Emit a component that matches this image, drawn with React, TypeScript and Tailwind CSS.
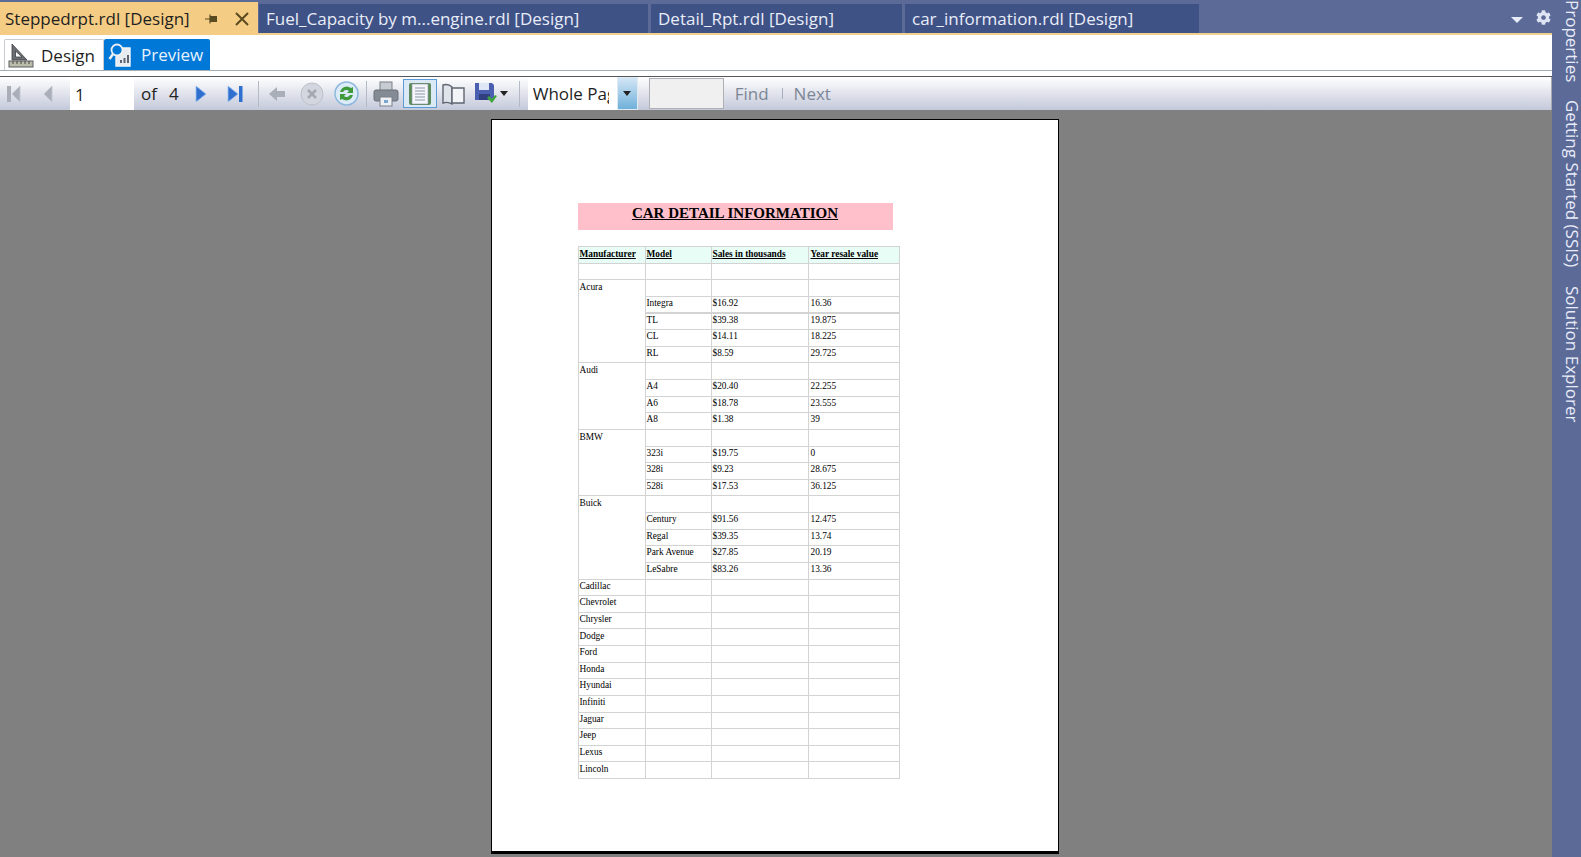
import { FaCog } from "react-icons/fa";

const sans = "font-['Open_Sans','Noto_Sans',sans-serif]";

type Row = { make?: string; span?: number; model?: string; sales?: string; resale?: string; thick?: boolean };

const rows: Row[] = [
  { make: "" },
  { make: "Acura", span: 5 },
  { model: "Integra", sales: "$16.92", resale: "16.36", thick: true },
  { model: "TL", sales: "$39.38", resale: "19.875" },
  { model: "CL", sales: "$14.11", resale: "18.225" },
  { model: "RL", sales: "$8.59", resale: "29.725" },
  { make: "Audi", span: 4 },
  { model: "A4", sales: "$20.40", resale: "22.255" },
  { model: "A6", sales: "$18.78", resale: "23.555" },
  { model: "A8", sales: "$1.38", resale: "39" },
  { make: "BMW", span: 4 },
  { model: "323i", sales: "$19.75", resale: "0" },
  { model: "328i", sales: "$9.23", resale: "28.675" },
  { model: "528i", sales: "$17.53", resale: "36.125" },
  { make: "Buick", span: 5 },
  { model: "Century", sales: "$91.56", resale: "12.475" },
  { model: "Regal", sales: "$39.35", resale: "13.74" },
  { model: "Park Avenue", sales: "$27.85", resale: "20.19" },
  { model: "LeSabre", sales: "$83.26", resale: "13.36" },
  ...["Cadillac", "Chevrolet", "Chrysler", "Dodge", "Ford", "Honda", "Hyundai", "Infiniti", "Jaguar", "Jeep", "Lexus", "Lincoln"].map((make) => ({ make })),
];

const cell = "border border-[#d3d3d3] pl-[1px] pr-[2px] pb-[2px] align-middle leading-none";

function Tab({ label, width }: { label: string; width: string }) {
  return (
    <div className={`${width} h-[29px] mt-[4px] mr-[3px] pl-[7px] bg-[#3f5286] text-[#e9edf8] text-[17px] leading-[29px] whitespace-nowrap`}>
      {label}
    </div>
  );
}

function Sep() {
  return <div className="w-px h-[26px] bg-[#b4b9c6] shrink-0" />;
}

function Tri({ dir, blue, bar }: { dir: "l" | "r"; blue?: boolean; bar?: boolean }) {
  const tri = dir === "l" ? "M15 2v16L7 10z" : "M4 2v16l10-8z";
  const line = dir === "l" ? "M2 2h4v16H2z" : "M15 2h3.500v16H15z";
  const color = blue ? "#2f6fd0" : "#a9aeb8";
  return (
    <svg width="20" height="20" viewBox="0 0 20 20" className="shrink-0">
      <path d={tri} fill={color} stroke={blue ? "#9dc0ee" : "#c3c7d0"} strokeWidth="0.8" />
      {bar && <path d={line} fill={color} />}
    </svg>
  );
}

function DesignIcon() {
  return (
    <svg width="26" height="26" viewBox="0 0 26 26" className="shrink-0">
      <path d="M4 1v16h15z M7.500 8v6h6.500z" fillRule="evenodd" fill="#6b6e72" stroke="#3c3f44" strokeWidth="0.8" />
      <rect x="1" y="18" width="24" height="6" fill="#bcbcaa" stroke="#5a5d60" />
      <path d="M5 18v3M9 18v3M13 18v3M17 18v3M21 18v3" stroke="#444" />
    </svg>
  );
}

function PreviewIcon() {
  return (
    <svg width="26" height="26" viewBox="0 0 26 26" className="shrink-0">
      <path d="M11 6h11v18H8V15z" fill="#e8ecf1" stroke="#f4f6f8" strokeWidth="1.4" />
      <circle cx="9" cy="8" r="5.500" fill="#0078d7" stroke="#eef1f4" strokeWidth="1.800" />
      <path d="M5 12 1.500 17" stroke="#eef1f4" strokeWidth="2.500" />
      <path d="M12 21v-3h2v3zM15.500 21v-5h2v5zM19 21v-8h2v8z" fill="#5b6470" />
    </svg>
  );
}

function Printer() {
  return (
    <svg width="26" height="26" viewBox="0 0 26 26" className="shrink-0">
      <rect x="7" y="1" width="12" height="9" fill="#c7cbd2" stroke="#7a808a" />
      <rect x="1" y="9" width="24" height="11" rx="2" fill="#858b95" stroke="#6a7079" />
      <rect x="7" y="16" width="12" height="9" fill="#eef0f4" stroke="#7a808a" />
      <rect x="11" y="19" width="4" height="3" fill="#7aa7d2" />
    </svg>
  );
}

export default function App() {
  return (
    <div className={`flex w-[1581px] h-[857px] overflow-hidden bg-[#5c6a98] ${sans}`}>
      <div className="flex flex-col w-[1552px] shrink-0">
        {/* document tabs */}
        <div className="flex h-[33px] shrink-0 relative">
          <div className="w-[258px] h-[33px] mt-[2px] mr-px pl-[5px] pt-px bg-[#f5cc84] text-[#1f1f1f] text-[17px] leading-[32px] flex items-center whitespace-nowrap">
            <span className="w-[200px]">Steppedrpt.rdl [Design]</span>
            <svg width="14" height="12" viewBox="0 0 14 12" className="shrink-0">
              <path d="M0 6h5M5 1.500v9" stroke="#5a4a20" strokeWidth="1.200" fill="none" />
              <path d="M5 3h7v6H5z" fill="#5a4a20" />
            </svg>
            <svg width="14" height="14" viewBox="0 0 14 14" className="ml-[16px] shrink-0">
              <path d="M1 1l12 12M13 1 1 13" stroke="#5a4a20" strokeWidth="2" />
            </svg>
          </div>
          <Tab label="Fuel_Capacity by m...engine.rdl [Design]" width="w-[389px]" />
          <Tab label="Detail_Rpt.rdl [Design]" width="w-[251px]" />
          <Tab label="car_information.rdl [Design]" width="w-[294px]" />
          <div className="flex-1 flex items-center justify-end pr-px pt-[4px] gap-[13px]">
            <svg width="12" height="6" viewBox="0 0 12 6" className="mt-[3px]"><path d="M0 0h12L6 6z" fill="#e8ecf8" /></svg>
            <FaCog className="text-[#dfe4f4] w-[15px] h-[15px] -mt-[3px]" />
          </div>
        </div>
        <div className="h-[2px] bg-[#efd08f] shrink-0" />

        {/* design / preview */}
        <div className="h-[36px] bg-white border-b border-[#a5adb3] shrink-0 flex items-end pl-[4px]">
          <div className="w-[100px] h-[31px] pt-px border border-b-0 border-[#c8ccd0] rounded-t-[2px] flex items-center pl-[3px] gap-[7px] text-[17px] text-[#1f1f1f]">
            <DesignIcon />
            Design
          </div>
          <div className="w-[106px] h-[31px] pt-px bg-[#0078d7] rounded-t-[2px] flex items-center pl-[4px] gap-[7px] text-[17px] text-[#e8f2fb]">
            <PreviewIcon />
            Preview
          </div>
        </div>
        <div className="h-[6px] bg-white border-b border-[#55585c] shrink-0" />

        {/* report toolbar */}
        <div className="h-[33px] shrink-0 flex items-center bg-gradient-to-b from-white to-[#c4c9da] border-r border-[#a8aab0] text-[17px] pl-[5px]">
          <Tri dir="l" bar />
          <div className="w-[12px]" />
          <Tri dir="l" />
          <div className="w-[13px]" />
          <div className="w-[64px] h-[33px] bg-white pl-[5px] leading-[35px] text-[#1f1f1f]">1</div>
          <span className="ml-[7px] text-[#222]">of</span>
          <span className="ml-[12px] text-[#222]">4</span>
          <div className="w-[13px]" />
          <Tri dir="r" blue />
          <div className="w-[12px]" />
          <Tri dir="r" blue bar />
          <div className="w-[14px]" />
          <Sep />
          <svg width="16" height="14" viewBox="0 0 16 14" className="ml-[10px] shrink-0">
            <path d="M8 0v4h8v6H8v4L0 7z" fill="#a9aeb8" />
          </svg>
          <svg width="24" height="24" viewBox="0 0 24 24" className="ml-[15px] shrink-0">
            <circle cx="12" cy="12" r="11" fill="#d3d6de" stroke="#bcc0ca" />
            <path d="M8 8l8 8M16 8l-8 8" stroke="#a4a8b2" strokeWidth="2.500" />
          </svg>
          <svg width="25" height="25" viewBox="0 0 25 25" className="ml-[10px] shrink-0">
            <circle cx="12.500" cy="12.500" r="11.500" fill="#dcebf8" stroke="#8db8dc" strokeWidth="1.500" />
            <path d="M6 11a7 7 0 0 1 11-4l2-1v6h-6l2-2a4 4 0 0 0-6 1z" fill="#3f9a3c" />
            <path d="M19 14a7 7 0 0 1-11 4l-2 1v-6h6l-2 2a4 4 0 0 0 6-1z" fill="#3f9a3c" />
          </svg>
          <div className="w-[7px]" />
          <Sep />
          <div className="w-[6px]" />
          <Printer />
          <div className="ml-[4px] w-[34px] h-[29px] border border-[#5a9bd8] bg-[#dbe9f7] flex items-center justify-center shrink-0">
            <svg width="24" height="24" viewBox="0 0 24 24">
              <rect x="1" y="1" width="22" height="22" rx="2" fill="#5d8a5a" />
              <rect x="4" y="2" width="16" height="20" fill="#f4f6fa" stroke="#8b97a8" strokeWidth="0.600" />
              <path d="M7 6h10M7 9h10M7 12h10M7 15h10M7 18h10" stroke="#8b97a8" />
            </svg>
          </div>
          <svg width="24" height="22" viewBox="0 0 24 22" className="ml-[4px] shrink-0">
            <path d="M11 4C8 1 5 1 2 2v18c3-1 6-1 9 1z" fill="#dfe3ea" stroke="#5f6570" strokeWidth="1.400" />
            <path d="M11 5h12v15H11z" fill="#f2f4f8" stroke="#5f6570" strokeWidth="1.400" />
          </svg>
          <svg width="24" height="24" viewBox="0 0 24 24" className="ml-[9px] shrink-0">
            <path d="M1 1h17l2 2v15H1z" fill="#4a5fb0" />
            <rect x="5" y="1" width="10" height="7" fill="#dfe6f5" />
            <rect x="5" y="12" width="11" height="6" fill="#2f3f80" />
            <path d="M13 16l5 5 5-7-2-1-3 4-3-3z" fill="#3fa63c" />
          </svg>
          <svg width="8" height="5" viewBox="0 0 8 5" className="ml-[2px] shrink-0"><path d="M0 0h8L4 5z" fill="#222" /></svg>
          <div className="w-[11px]" />
          <Sep />
          <div className="ml-[8px] w-[89px] h-[33px] bg-white pl-[5px] pr-[8px] leading-[33px] text-[#1f1f1f] shrink-0">
            <div className="overflow-hidden whitespace-nowrap">Whole Page</div>
          </div>
          <div className="w-[21px] h-[33px] bg-gradient-to-b from-[#d3e6f5] to-[#6fb0da] border border-[#dfeaf3] flex items-center justify-center shrink-0">
            <svg width="8" height="5" viewBox="0 0 8 5"><path d="M0 0h8L4 5z" fill="#222" /></svg>
          </div>
          <div className="ml-[11px] w-[75px] h-[31px] bg-[#f0f0f0] border border-[#aeb0b6] shrink-0" />
          <span className="ml-[11px] text-[#7d8696]">Find</span>
          <div className="ml-[13px] w-px h-[11px] bg-[#a8aebb]" />
          <span className="ml-[11px] text-[#7d8696]">Next</span>
        </div>

        {/* report page */}
        <div className="flex-1 bg-[#808080] flex justify-center pt-[9px] overflow-hidden">
          <div className="w-[568px] h-[735px] bg-white border border-black border-b-[3px] pt-[83px] pl-[86px] font-['Liberation_Serif',serif] text-black shrink-0 -ml-[3px]">
            <div className="w-[315px] h-[27px] bg-[#ffc0cb] text-center font-bold underline text-[15px] leading-[20px]">
              CAR DETAIL INFORMATION
            </div>
            <table className="mt-[16px] w-[321px] table-fixed border-collapse text-[9.33px]">
              <colgroup>
                <col className="w-[67px]" />
                <col className="w-[66px]" />
                <col className="w-[97px]" />
                <col className="w-[91px]" />
              </colgroup>
              <tbody>
                <tr className="h-[16.625px] bg-[#e8fdf5] font-bold underline whitespace-nowrap">
                  <td className={cell + " !pb-0"}>Manufacturer</td>
                  <td className={cell + " !pb-0"}>Model</td>
                  <td className={cell + " !pb-0"}>Sales in thousands</td>
                  <td className={cell + " !pb-0 !pl-[2px]"}>Year resale value</td>
                </tr>
                {rows.map((r, i) => (
                  <tr key={i} className="h-[16.625px]">
                    {r.make !== undefined && (
                      <td rowSpan={r.span ?? 1} className={`${cell} ${r.span ? "!align-top pt-[3px]" : ""}`}>
                        {r.make}
                      </td>
                    )}
                    <td className={`${cell} ${r.thick ? "border-b-2" : ""}`}>{r.model}</td>
                    <td className={`${cell} ${r.thick ? "border-b-2" : ""}`}>{r.sales}</td>
                    <td className={`${cell} !pl-[2px] ${r.thick ? "border-b-2" : ""}`}>{r.resale}</td>
                  </tr>
                ))}
              </tbody>
            </table>
          </div>
        </div>
      </div>

      {/* collapsed tool windows */}
      <div className="flex-1 flex flex-row gap-[18px] items-center pl-[12px] text-[#e8ecf8] text-[17px] leading-none [writing-mode:vertical-rl] whitespace-nowrap">
        <span>Properties</span>
        <span>Getting Started (SSIS)</span>
        <span>Solution Explorer</span>
      </div>
    </div>
  );
}
